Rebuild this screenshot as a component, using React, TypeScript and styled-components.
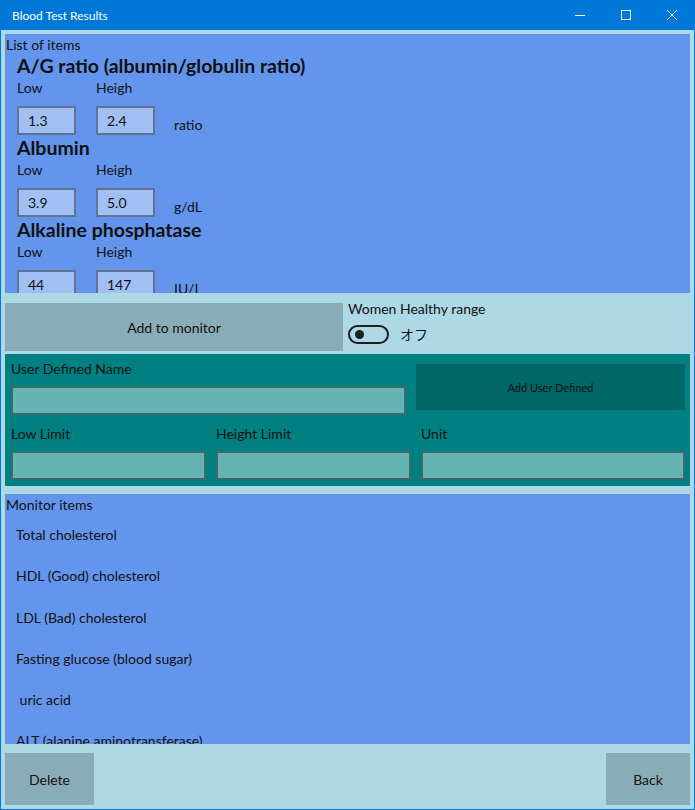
import React from "react";
import styled, { createGlobalStyle } from "styled-components";

const GlobalStyle = createGlobalStyle`
  html, body { margin: 0; padding: 0; background: #add8e6; }
  body { font-family: "Segoe UI", "Lato", "Noto Sans CJK JP", sans-serif; color: #111; }
  * { box-sizing: border-box; }
`;

const Window = styled.div`
  width: 695px;
  height: 810px;
  display: flex;
  flex-direction: column;
  background: #add8e6;
  border: 1px solid #0078d7;
  border-top: none;
  overflow: hidden;
`;

const TitleBar = styled.div`
  height: 30px;
  flex: none;
  margin: 0 -1px;
  background: #0078d7;
  color: #fff;
  display: flex;
  align-items: center;
  padding-left: 12px;
  font-size: 12px;
`;

const Title = styled.span`
  flex: 1;
`;

const CaptionButton = styled.div`
  width: 46px;
  height: 30px;
  display: flex;
  align-items: center;
  justify-content: center;
`;

const Body = styled.div`
  flex: 1;
  display: flex;
  flex-direction: column;
  padding: 4px;
  min-height: 0;
`;

const BluePanel = styled.section<{ $h: number }>`
  height: ${(p) => p.$h}px;
  flex: none;
  background: #6495ed;
  overflow: hidden;
  position: relative;
`;

const PanelCaption = styled.div`
  font-size: 14px;
  line-height: 18px;
  padding: 2px 0 0 1px;
`;

const ItemBlock = styled.div`
  padding-left: 12px;
  height: 82px;
  display: flex;
  flex-direction: column;
`;

const ItemTitle = styled.div`
  font-size: 19.5px;
  font-weight: 700;
  line-height: 24px;
`;

const RangeRow = styled.div`
  display: flex;
  align-items: flex-end;
`;

const Field = styled.div`
  display: flex;
  flex-direction: column;
  width: 79px;
`;

const FieldLabel = styled.div`
  font-size: 14px;
  line-height: 18px;
  height: 28px;
  padding-top: 1px;
`;

const RangeBox = styled.div`
  width: 59px;
  height: 29px;
  border: 2px solid rgba(0, 0, 0, 0.4);
  background: rgba(255, 255, 255, 0.4);
  font-size: 14px;
  line-height: 25px;
  padding-left: 9px;
`;

const Unit = styled.div`
  font-size: 14px;
  line-height: 18px;
  margin-left: -1px;
  padding-bottom: 1px;
`;

const ActionRow = styled.div`
  display: flex;
  margin-top: 10px;
  height: 48px;
  flex: none;
`;

const GrayButton = styled.div<{ $w: number }>`
  width: ${(p) => p.$w}px;
  background: rgba(0, 0, 0, 0.2);
  display: flex;
  align-items: center;
  justify-content: center;
  font-size: 14px;
`;

const ToggleArea = styled.div`
  margin-left: 5px;
  display: flex;
  flex-direction: column;
  font-size: 14px;
`;

const ToggleLabel = styled.div`
  line-height: 18px;
  margin-top: -3px;
`;

const ToggleRow = styled.div`
  display: flex;
  align-items: center;
  margin-top: 6px;
  gap: 11px;
`;

const Switch = styled.div`
  width: 41px;
  height: 19px;
  border: 2px solid #1e1e1e;
  border-radius: 10px;
  position: relative;
`;

const Knob = styled.div`
  position: absolute;
  left: 5px;
  top: 3.5px;
  width: 9px;
  height: 9px;
  border-radius: 50%;
  background: #1e1e1e;
`;

const TealPanel = styled.section`
  margin-top: 3px;
  height: 132px;
  flex: none;
  background: #008080;
  padding: 6px 5px 0 6px;
  display: flex;
  flex-direction: column;
`;

const TealTop = styled.div`
  display: flex;
  gap: 10px;
  height: 61px;
`;

const TealField = styled.div<{ $w: number }>`
  width: ${(p) => p.$w}px;
  display: flex;
  flex-direction: column;
`;

const TealLabel = styled.div`
  font-size: 14px;
  line-height: 18px;
  height: 26px;
`;

const TealBox = styled.div`
  height: 29px;
  border: 2px solid rgba(0, 0, 0, 0.4);
  background: rgba(255, 255, 255, 0.4);
`;

const AddUserButton = styled.div`
  width: 269px;
  height: 46px;
  margin-top: 4px;
  background: rgba(0, 0, 0, 0.2);
  display: flex;
  align-items: center;
  justify-content: center;
  font-size: 11px;
`;

const TealBottom = styled.div`
  display: flex;
  gap: 10px;
  margin-top: 4px;
`;

const MonitorPanel = styled(BluePanel)`
  margin-top: 8px;
`;

const MonitorItem = styled.div`
  font-size: 14px;
  line-height: 18px;
  height: 41.3px;
  padding-left: 11px;
  white-space: pre;
`;

const MonitorList = styled.div`
  padding-top: 12px;
`;

const BottomRow = styled.div`
  margin-top: 9px;
  height: 52px;
  display: flex;
  justify-content: space-between;
  flex: none;
`;

const items = [
  { name: "A/G ratio (albumin/globulin ratio)", low: "1.3", high: "2.4", unit: "ratio" },
  { name: "Albumin", low: "3.9", high: "5.0", unit: "g/dL" },
  { name: "Alkaline phosphatase", low: "44", high: "147", unit: "IU/L" },
];

const monitors = [
  "Total cholesterol",
  "HDL (Good) cholesterol",
  "LDL (Bad) cholesterol",
  "Fasting glucose (blood sugar)",
  " uric acid",
  "ALT (alanine aminotransferase)",
];

export default function App() {
  return (
    <>
      <GlobalStyle />
      <Window>
        <TitleBar>
          <Title>Blood Test Results</Title>
          <CaptionButton>
            <svg width="10" height="10" viewBox="0 0 10 10">
              <line x1="0" y1="5.5" x2="10" y2="5.5" stroke="#fff" strokeWidth="1" />
            </svg>
          </CaptionButton>
          <CaptionButton>
            <svg width="10" height="10" viewBox="0 0 10 10">
              <rect x="0.5" y="0.5" width="9" height="9" fill="none" stroke="#fff" strokeWidth="1" />
            </svg>
          </CaptionButton>
          <CaptionButton>
            <svg width="10" height="10" viewBox="0 0 10 10">
              <path d="M0 0 L10 10 M10 0 L0 10" stroke="#fff" strokeWidth="1" />
            </svg>
          </CaptionButton>
        </TitleBar>
        <Body>
          <BluePanel $h={259}>
            <PanelCaption>List of items</PanelCaption>
            {items.map((it) => (
              <ItemBlock key={it.name}>
                <ItemTitle>{it.name}</ItemTitle>
                <RangeRow>
                  <Field>
                    <FieldLabel>Low</FieldLabel>
                    <RangeBox>{it.low}</RangeBox>
                  </Field>
                  <Field>
                    <FieldLabel>Heigh</FieldLabel>
                    <RangeBox>{it.high}</RangeBox>
                  </Field>
                  <Unit>{it.unit}</Unit>
                </RangeRow>
              </ItemBlock>
            ))}
          </BluePanel>
          <ActionRow>
            <GrayButton $w={338}>Add to monitor</GrayButton>
            <ToggleArea>
              <ToggleLabel>Women Healthy range</ToggleLabel>
              <ToggleRow>
                <Switch>
                  <Knob />
                </Switch>
                <span>オフ</span>
              </ToggleRow>
            </ToggleArea>
          </ActionRow>
          <TealPanel>
            <TealTop>
              <TealField $w={395}>
                <TealLabel>User Defined Name</TealLabel>
                <TealBox />
              </TealField>
              <AddUserButton>Add User Defined</AddUserButton>
            </TealTop>
            <TealBottom>
              <TealField $w={195}>
                <TealLabel>Low Limit</TealLabel>
                <TealBox />
              </TealField>
              <TealField $w={195}>
                <TealLabel>Height Limit</TealLabel>
                <TealBox />
              </TealField>
              <TealField $w={264}>
                <TealLabel>Unit</TealLabel>
                <TealBox />
              </TealField>
            </TealBottom>
          </TealPanel>
          <MonitorPanel $h={250}>
            <PanelCaption>Monitor items</PanelCaption>
            <MonitorList>
              {monitors.map((m) => (
                <MonitorItem key={m}>{m}</MonitorItem>
              ))}
            </MonitorList>
          </MonitorPanel>
          <BottomRow>
            <GrayButton $w={89}>Delete</GrayButton>
            <GrayButton $w={84}>Back</GrayButton>
          </BottomRow>
        </Body>
      </Window>
    </>
  );
}
